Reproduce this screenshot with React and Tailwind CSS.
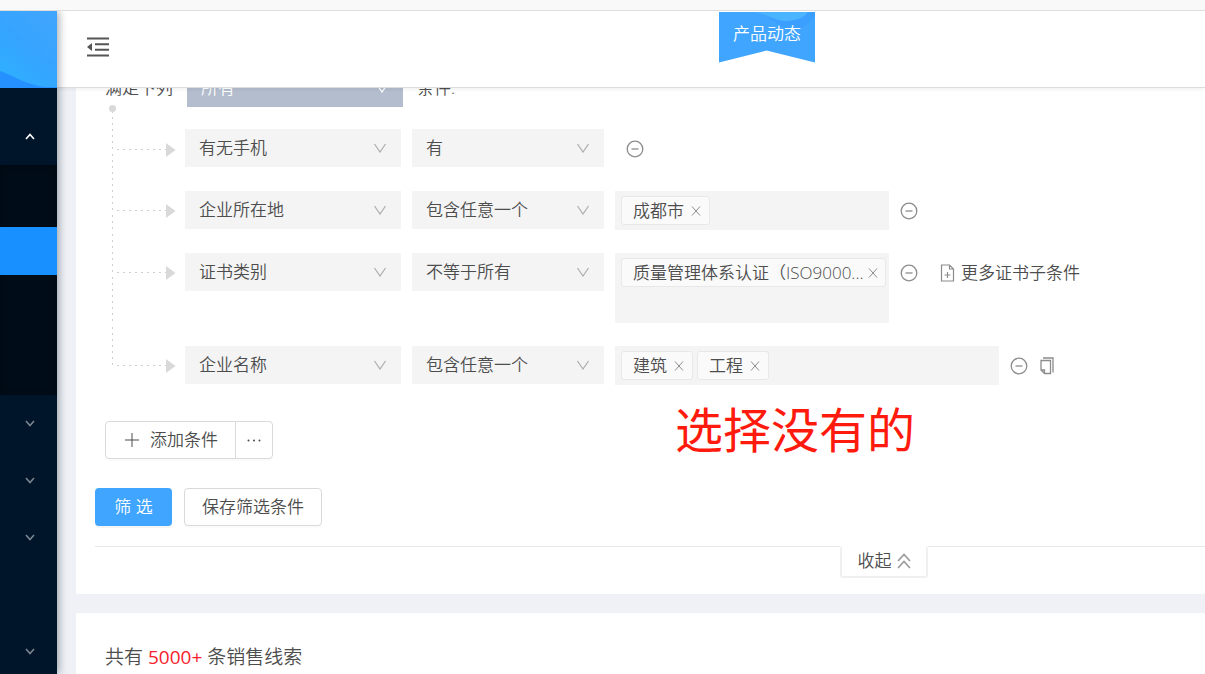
import { useState } from 'react';

const CONDITIONS = [
  { field: '有无手机', operator: '有', tags: null },
  { field: '企业所在地', operator: '包含任意一个', tags: ['成都市'] },
  { field: '证书类别', operator: '不等于所有', tags: ['质量管理体系认证（ISO9000...'], tall: true, more: '更多证书子条件' },
  { field: '企业名称', operator: '包含任意一个', tags: ['建筑', '工程'], wide: true, copy: true },
];

function Chevron({ className, up }) {
  return (
    <svg viewBox="0 0 14 10" className={className} fill="none" stroke="currentColor" strokeWidth="1.300" aria-hidden="true">
      <path d={up ? 'M1 9 7 1l6 8' : 'M1.500 1 7 9l5.500-8'} />
    </svg>
  );
}

function SelectBox({ label, value, width, tone, icon }) {
  return (
    <div className={`relative shrink-0 ${width}`}>
      <select
        aria-label={label}
        defaultValue={value}
        className={`block h-[38px] w-full appearance-none pl-[14px] pr-8 text-[17px] outline-none ${tone}`}
      >
        <option>{value}</option>
      </select>
      <Chevron className={`pointer-events-none absolute right-[14px] top-[14px] h-[10px] w-[14px] ${icon}`} />
    </div>
  );
}

function Tag({ text, full, onRemove }) {
  return (
    <span className={`flex h-[29px] shrink-0 items-center justify-between rounded-[3px] border border-[#e8e8e8] bg-[#fafafa] pl-[11px] ${full ? 'w-[265px] gap-1 pr-[7px]' : 'gap-[7px] pr-2'}`}>
      <span className="whitespace-nowrap">{text}</span>
      <button type="button" aria-label={`移除 ${text}`} onClick={onRemove} className="text-[#8c8c8c]">
        <svg viewBox="0 0 10 10" className="h-[10px] w-[10px]" fill="none" stroke="currentColor" aria-hidden="true">
          <path d="M1 0.500l8 9M9 0.500l-8 9" />
        </svg>
      </button>
    </span>
  );
}

function TagField({ label, initial, tall, wide }) {
  const [tags, setTags] = useState(initial);

  return (
    <div className={`flex shrink-0 items-start gap-1 bg-[#f4f4f4] py-[5px] pl-[6px] ${wide ? 'w-[384px]' : 'w-[274px]'} ${tall ? 'min-h-[70px]' : 'min-h-[39px]'}`}>
      {tags.map((tag) => (
        <Tag key={tag} text={tag} full={tall} onRemove={() => setTags(tags.filter((t) => t !== tag))} />
      ))}
      {!tall && <input aria-label={label} className="h-[29px] min-w-0 flex-1 bg-transparent outline-none" />}
    </div>
  );
}

function Connector({ first, last }) {
  return (
    <div className="relative flex w-[80px] shrink-0 flex-col pl-[7px]">
      {first && <span className="absolute -top-[2px] left-[4px] h-[7px] w-[7px] rounded-full bg-[#d9d9d9]" />}
      <div className="flex h-[43px] items-end">
        <div className="h-full w-px bg-[repeating-linear-gradient(180deg,transparent_0_4px,#cfcfcf_4px_6px)]" />
        <div className="h-px w-[53px] bg-[repeating-linear-gradient(90deg,transparent_0_4px,#cfcfcf_4px_6px)]" />
        <svg viewBox="0 0 10 14" className="-mb-[7px] h-[14px] w-[10px]" aria-hidden="true">
          <path d="M0 0l9.500 7L0 14z" fill="#d9d9d9" />
        </svg>
      </div>
      {!last && <div className="w-px flex-1 bg-[repeating-linear-gradient(180deg,transparent_0_4px,#cfcfcf_4px_6px)]" />}
    </div>
  );
}

function ConditionRow({ condition, first, last }) {
  const { field, operator, tags, tall, wide, more, copy } = condition;

  return (
    <div className="flex">
      <Connector first={first} last={last} />
      <div className={`flex items-start gap-[11px] ${first ? 'pt-[22px]' : 'pt-[23px]'}`}>
        <SelectBox label="条件字段" value={field} width="w-[216px]" tone="bg-[#f4f4f4]" icon="text-[#b0b0b0]" />
        <SelectBox label="条件关系" value={operator} width="w-[192px]" tone="bg-[#f4f4f4]" icon="text-[#b0b0b0]" />
        {tags && <TagField label={field} initial={tags} tall={tall} wide={wide} />}
        <div className="flex h-[39px] items-center">
          <button type="button" aria-label="删除条件" className={first ? 'ml-[11px] text-[#8c8c8c]' : 'text-[#8c8c8c]'}>
            <svg viewBox="0 0 18 18" className="h-[18px] w-[18px]" fill="none" stroke="currentColor" strokeWidth="1.300" aria-hidden="true">
              <circle cx="9" cy="9" r="7.800" />
              <path d="M5.500 9h7" />
            </svg>
          </button>
          {more && (
            <button type="button" className="ml-[22px] flex items-center gap-[6px] whitespace-nowrap">
              <svg viewBox="0 0 15 18" className="h-[18px] w-[15px] text-[#8c8c8c]" fill="none" stroke="currentColor" strokeWidth="1.200" aria-hidden="true">
                <path d="M1.500 1h8l4 4v12h-12zM9.500 1v4h4M7.500 8v6M4.500 11h6" />
              </svg>
              {more}
            </button>
          )}
          {copy && (
            <button type="button" aria-label="复制条件" className="ml-3 text-[#8c8c8c]">
              <svg viewBox="0 0 14 18" className="h-[18px] w-[14px]" fill="none" stroke="currentColor" strokeWidth="1.300" aria-hidden="true">
                <path d="M3 1h10v14.500" />
                <path d="M1 3.500h9.500v13H4.500L1 13zM1 13h3.500v3.500" />
              </svg>
            </button>
          )}
        </div>
      </div>
    </div>
  );
}

function SideArrow({ up }) {
  return (
    <svg viewBox="0 0 10 7" className="h-[7px] w-[10px]" fill="none" stroke="currentColor" strokeWidth="1.600" aria-hidden="true">
      <path d={up ? 'M1 6l4-4.500L9 6' : 'M1 1l4 4.500L9 1'} />
    </svg>
  );
}

function Sidebar() {
  return (
    <aside className="z-10 flex w-[57px] shrink-0 flex-col overflow-hidden bg-[#001529] shadow-[2px_0_8px_rgba(0,21,41,0.35)]">
      <svg viewBox="0 0 57 77" preserveAspectRatio="none" className="h-[77px] w-full shrink-0" aria-hidden="true">
        <defs>
          <linearGradient id="logoTop" x1="0.8" y1="0" x2="0.2" y2="1">
            <stop offset="0" stopColor="#40a5fc" />
            <stop offset="0.5" stopColor="#35a4ff" />
            <stop offset="1" stopColor="#2eb0ff" />
          </linearGradient>
        </defs>
        <path d="M0 0h57v77H0z" fill="url(#logoTop)" />
        <path d="M0 60c14 5 27 14 45 16h12v1H0z" fill="#2590ff" />
      </svg>
      <nav aria-label="主菜单">
        <button type="button" aria-label="收起菜单" className="flex h-[77px] w-full items-center justify-center pl-[2px] pt-[19px] text-white">
          <SideArrow up />
        </button>
        <div className="bg-[#000c17] pb-[120px] pt-[62px] shadow-[inset_0_2px_6px_rgba(0,0,0,0.3)]">
          <a href="#leads" aria-label="销售线索" className="block h-[48px] bg-[#1890ff]" />
        </div>
        {[true, true, true, false, true].map((arrow, i) => (
          <button key={i} type="button" aria-label={`菜单 ${i + 1}`} className="flex h-[57px] w-full items-center justify-center pl-[2px] text-[#7a8590]">
            {arrow && <SideArrow />}
          </button>
        ))}
      </nav>
    </aside>
  );
}

function Header() {
  return (
    <header className="z-[5] flex h-[77px] shrink-0 border-b border-[#dcdcdc] bg-white pl-[30px] shadow-[0_1px_4px_rgba(0,21,41,0.08)]">
      <button type="button" aria-label="折叠菜单" className="mb-1 self-center text-[#555]">
        <svg viewBox="0 0 22 20" className="h-[20px] w-[22px]" fill="none" stroke="currentColor" strokeWidth="2" aria-hidden="true">
          <path d="M0 1.500h22M8 7.300h14M8 12.700h14M0 18.500h22" />
          <path d="M5 6v8L0 10z" fill="currentColor" stroke="none" />
        </svg>
      </button>
      <div className="flex-[610_1_0%]" />
      <a href="#news" className="relative mt-px flex h-[51px] w-[96px] justify-center pt-[10px] text-[17px] font-[350] leading-6 text-white">
        <svg viewBox="0 0 96 51" preserveAspectRatio="none" className="absolute inset-0 h-full w-full" aria-hidden="true">
          <path d="M0 0h96v50.500L47.500 38.500 0 50.500z" fill="#40a5ff" />
          <path d="M36 0c12 2 18 8 30 9 12 0 20-4 24-9z" fill="#4ab4ff" />
          <path d="M60 8.500c14 2 24-1 29-8.500h7v5C88 14 80 19 70 17c-8-2-16-8-24-13z" fill="#3b9fff" />
        </svg>
        <span className="relative">产品动态</span>
      </a>
      <div className="flex-[390_1_0%]" />
    </header>
  );
}

function FilterCard() {
  return (
    <section className="relative -mt-[48px] rounded-[2px] bg-white pb-4 pl-[19px] pt-[29px]">
      <div className="pl-[10px]">
        <div className="flex h-[38px] items-center gap-[14px]">
          <span className="whitespace-nowrap">满足下列</span>
          <SelectBox label="满足下列" value="所有" width="w-[216px]" tone="bg-[#b3bdcd] text-white" icon="text-white" />
          <span className="whitespace-nowrap">条件:</span>
        </div>
        {CONDITIONS.map((condition, i) => (
          <ConditionRow key={condition.field} condition={condition} first={i === 0} last={i === CONDITIONS.length - 1} />
        ))}

        <div className="mt-9 flex">
          <button type="button" className="flex h-[38px] w-[131px] items-center justify-center gap-[11px] rounded-l-[4px] border border-[#d9d9d9] pl-[2px] shadow-[0_2px_0_rgba(0,0,0,0.015)]">
            <svg viewBox="0 0 14 14" className="h-[14px] w-[14px]" stroke="currentColor" aria-hidden="true">
              <path d="M7 0v14M0 7h14" />
            </svg>
            添加条件
          </button>
          <button type="button" aria-label="更多" className="-ml-px flex h-[38px] w-[38px] items-center justify-center rounded-r-[4px] border border-[#d9d9d9] shadow-[0_2px_0_rgba(0,0,0,0.015)]">
            <svg viewBox="0 0 14 3" className="h-[3px] w-[14px]" fill="currentColor" aria-hidden="true">
              <circle cx="1.500" cy="1.500" r="1" />
              <circle cx="7" cy="1.500" r="1" />
              <circle cx="12.500" cy="1.500" r="1" />
            </svg>
          </button>
        </div>
      </div>

      <div className="mt-[29px] flex gap-3">
        <button type="button" className="h-[38px] w-[77px] rounded-[4px] bg-[#40a5ff] text-white shadow-[0_2px_0_rgba(0,0,0,0.045)]">
          筛 选
        </button>
        <button type="button" className="h-[38px] w-[138px] rounded-[4px] border border-[#d9d9d9] shadow-[0_2px_0_rgba(0,0,0,0.015)]">
          保存筛选条件
        </button>
      </div>

      <div className="mt-5 flex">
        <div className="flex-[745_1_0%] border-t border-[#e8e8e8]" />
        <button type="button" className="flex h-8 w-[88px] items-center justify-center gap-[5px] rounded-[3px] border-x-2 border-b-2 border-[#f0f0f0]">
          收起
          <svg viewBox="0 0 14 16" className="h-[16px] w-[14px] text-[#999]" fill="none" stroke="currentColor" strokeWidth="1.600" aria-hidden="true">
            <path d="M1 8l6-6.500L13 8M1 15l6-6.500 6 6.500" />
          </svg>
        </button>
        <div className="flex-[277_1_0%] border-t border-[#e8e8e8]" />
      </div>

      <p className="absolute left-[599px] top-[354px] whitespace-nowrap text-[48px] font-normal leading-[72px] text-[#ff1a0e]">选择没有的</p>
    </section>
  );
}

export default function App() {
  return (
    <div className="flex h-screen flex-col overflow-hidden bg-[#eff1f6] font-['Open_Sans','Noto_Sans_CJK_SC',sans-serif] text-[17px] leading-[26px] text-[#4d4d4d]">
      <div className="z-20 h-[11px] shrink-0 border-b border-[#dedede] bg-[#f9f9f9]" />
      <div className="flex min-h-0 flex-1">
        <Sidebar />
        <div className="flex min-w-0 flex-1 flex-col">
          <Header />
          <main className="min-h-0 flex-1 overflow-hidden pl-[19px] font-[350]">
            <FilterCard />
            <section className="mt-[19px] rounded-[2px] bg-white px-[29px] pb-8 pt-[30px] text-[19px] leading-7">
              共有 <span className="font-normal text-[#f5222d]">5000+</span> 条销售线索
            </section>
          </main>
        </div>
      </div>
    </div>
  );
}
